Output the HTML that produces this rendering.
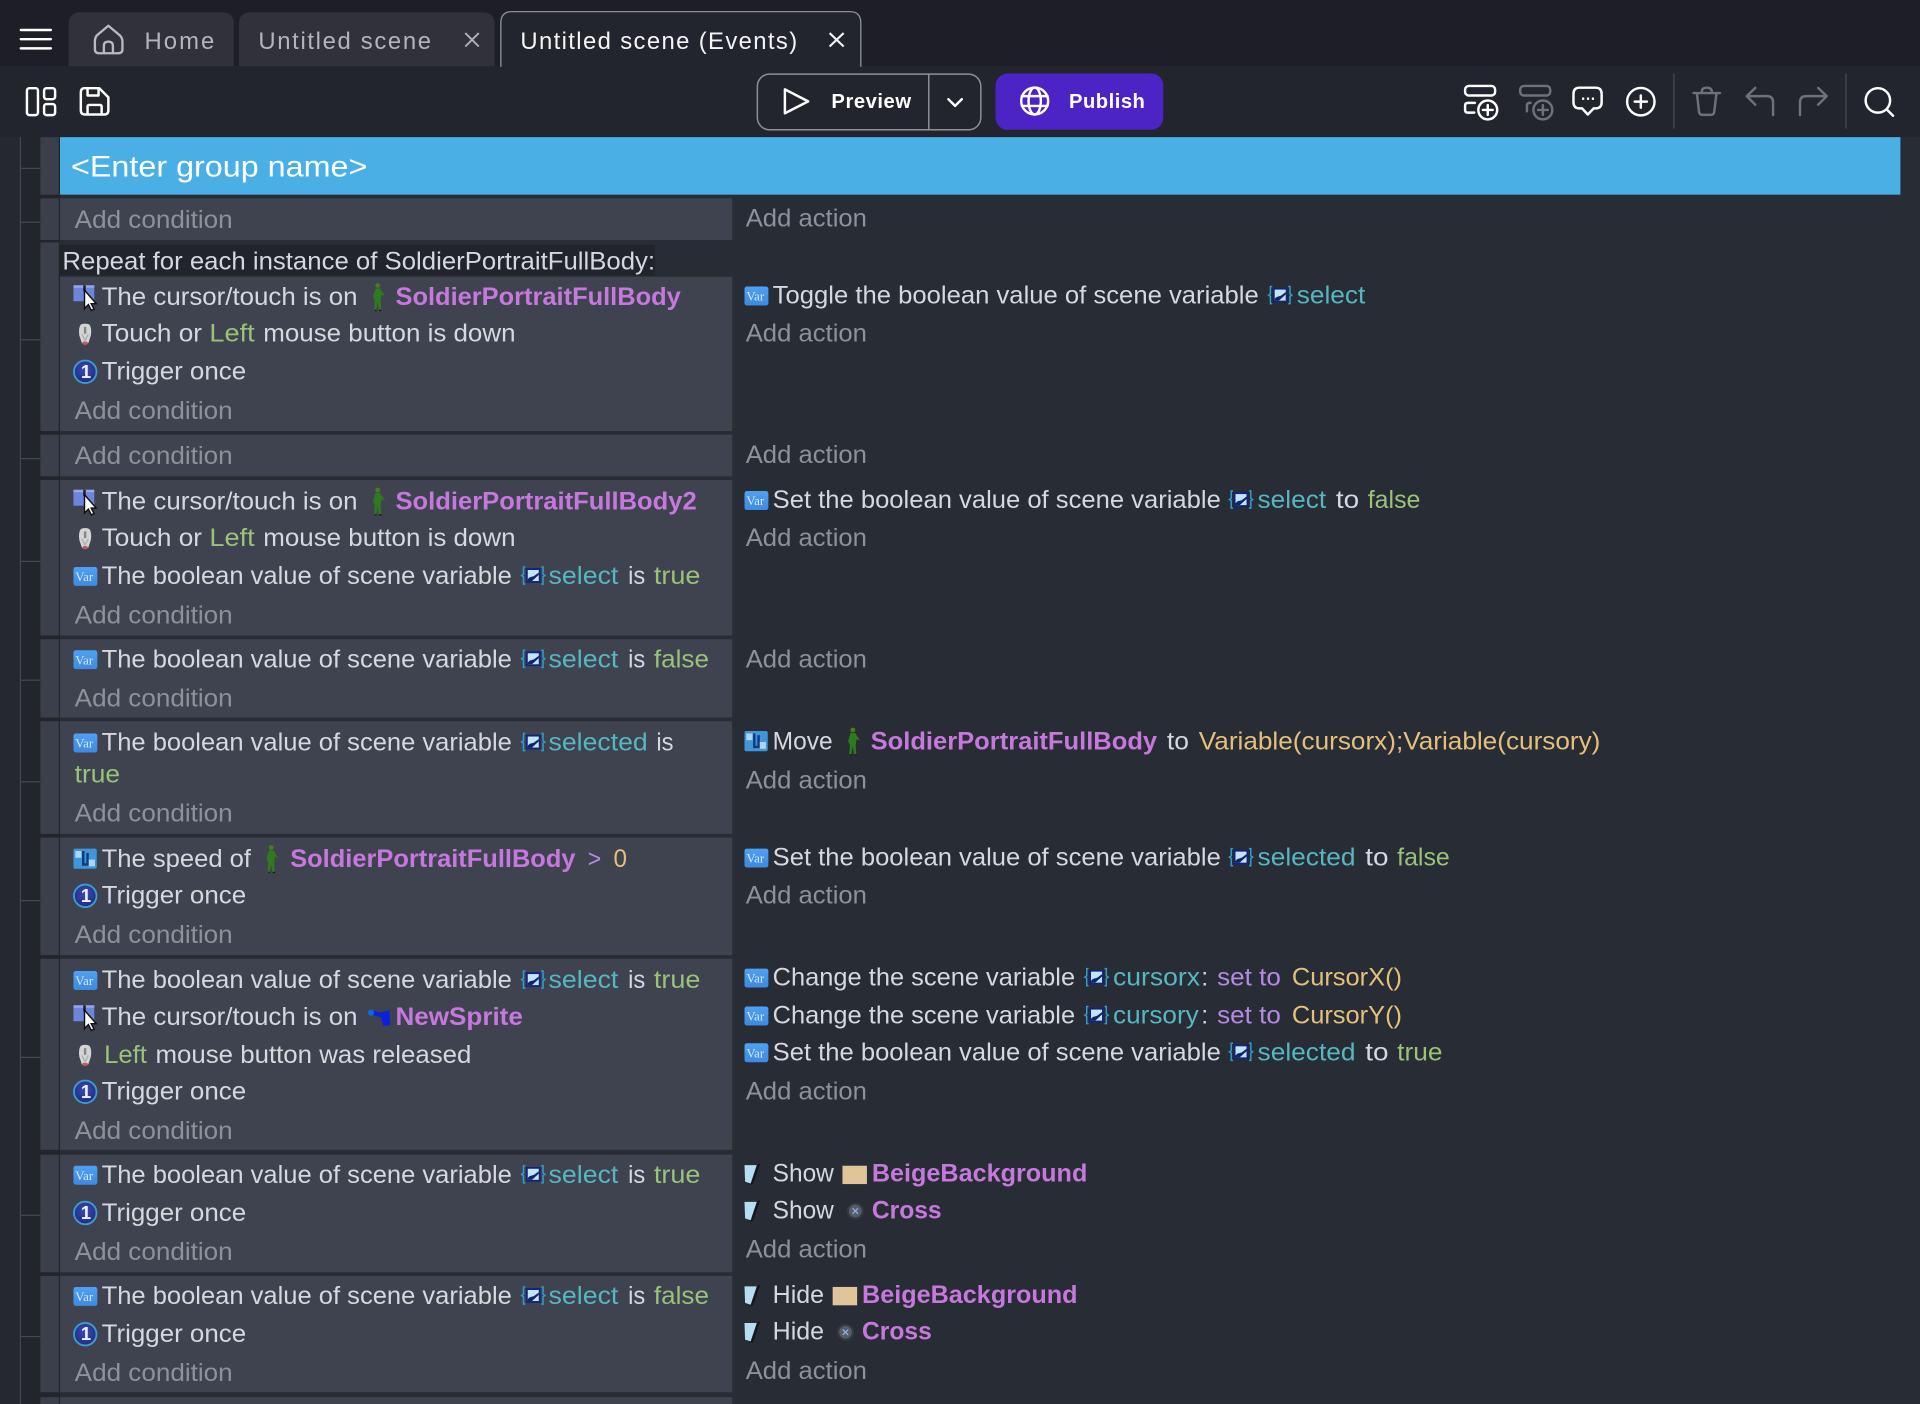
<!DOCTYPE html>
<html lang="en"><head><meta charset="utf-8"><title>Untitled scene (Events)</title>
<style>
html,body{margin:0;padding:0;background:#282c34;width:1920px;height:1404px;overflow:hidden}
svg{display:block;width:1920px;height:1404px}
text{font-family:"Liberation Sans",Arial,sans-serif;font-size:20.4px;fill:#d5d8de}
.a{fill:#8d919a}.p{fill:#c678dd;font-weight:700}.g{fill:#98c379}.c{fill:#56b6c2}.y{fill:#e5c07b}.m{fill:#b48ae6}
.tb{font-size:19.5px;fill:#b4b5ba}.tw{font-size:19.5px;fill:#f4f4f5}.bd{font-size:16.5px;font-weight:700;fill:#fff}
.v{font-family:"Liberation Serif",serif;font-size:10.5px;fill:#d5e8fb}.o{font-size:15px;font-weight:700;fill:#f0f3ff}
.s{fill:none;stroke:#fff;stroke-width:2;stroke-linecap:round;stroke-linejoin:round}
.d{fill:none;stroke:#6f7178;stroke-width:2;stroke-linecap:round;stroke-linejoin:round}
</style></head><body>
<svg xmlns="http://www.w3.org/2000/svg" viewBox="0 0 1568 1146.6" preserveAspectRatio="none">
<defs>
<linearGradient id="vg" x1="0" y1="0" x2="0" y2="1"><stop offset="0" stop-color="#4fa0f2"/><stop offset="1" stop-color="#3d8ae2"/></linearGradient>
<radialGradient id="og" cx=".5" cy=".4" r=".6"><stop offset="0" stop-color="#3c4cb4"/><stop offset="1" stop-color="#1f2c80"/></radialGradient>
<g id="var"><rect x="0" y="0" width="19.5" height="15.5" rx="2" fill="url(#vg)"/></g>
<g id="cur"><rect x="0" y="0" width="17" height="13" fill="#6d86dc"/><rect x="0" y="0" width="17" height="2" fill="#93a8ea"/><rect x="8" y="0" width="2" height="5" fill="#1a1c22"/><path d="M9 4V19L12.2 15.8 14.6 20.5 16.8 19.4 14.5 15H18.6Z" fill="#fff" stroke="#111" stroke-width="1.2"/></g>
<g id="mouse" transform="translate(2,1)"><path d="M2.5 1Q6-.5 9.5 1 11.7 4 10.7 10L8.7 16Q6 19 3.3 16L1.3 10Q.3 4 2.5 1Z" fill="#d4d5d3"/><path d="M6 3V8.5" stroke="#85878c" stroke-width="2" fill="none"/><path d="M3.4 9 6 14 8.6 9" stroke="#a9abaf" stroke-width="1" fill="none"/><path d="M3.6 16.2Q6 18.9 8.4 16.2L7.6 15H4.4Z" fill="#c8555a"/></g>
<g id="one"><circle cx="9.6" cy="9.6" r="9.2" fill="url(#og)" stroke="#3a9ed4" stroke-width="1.5"/></g>
<g id="sv"><path d="M3 1H1.5V7L0 8 1.5 9V15H3M16 1H17.5V7L19 8 17.5 9V15H16" fill="none" stroke="#2f9ed0" stroke-width="1.2"/><rect x="3.5" y="2" width="12" height="12" fill="#12247a"/><rect x="5" y="3.5" width="9" height="9" fill="#c2e4f6"/><path d="M5 12.5H8.5L14 7.5V5.5L10 8.5 6.5 9.5 5 11Z" fill="#0f2470"/></g>
<g id="sol"><circle cx="5.5" cy="2.2" r="2" fill="#4a7a1e"/><path d="M3.6 4.6H7.4L11.5 11 8.6 9.6 7.8 14.5 8.4 22.5H6.4L5.4 15.5 4.3 22.5H2.5L3.1 14.5 1.6 11.5Z" fill="#2f7a1c"/><path d="M3 22.5H4.6M6.6 22.5H8.6" stroke="#1a1f10" stroke-width="1.2"/></g>
<g id="eye"><path d="M3 1.5H13L8 16.5 3.5 15Z" fill="#b5def2"/><path d="M13.5 1 16 0 10 17 6 18 8.4 16.2Z" fill="#14161b"/></g>
<g id="x"><circle cx="7" cy="7" r="7" fill="#35383f"/><circle cx="7" cy="7" r="5.2" fill="#565c69"/><path d="M4.8 4.8 9.2 9.2M9.2 4.8 4.8 9.2" stroke="#8cb4e6" stroke-width="1"/></g>
<g id="mv"><rect x="0" y="0" width="19" height="16.5" rx="1.5" fill="#3f97da"/><path d="M8 2V13H11.5V3.5" fill="none" stroke="#123a7e" stroke-width="2"/><rect x="1.5" y="2" width="5" height="5.5" fill="#a9d8f5"/><rect x="12.5" y="9" width="5" height="5.5" fill="#a9d8f5"/></g>
</defs>

<!-- chrome -->
<rect width="1568" height="1147" fill="#282c34"/>
<rect width="1568" height="54" fill="#1d1e27"/>
<rect y="54" width="1568" height="58" fill="#23252e"/>
<path class="s" d="M17 24.5H41.5M17 32H41.5M17 39.5H41.5" stroke-width="2.5"/>
<path d="M56 54V20Q56 10 66 10H181Q191 10 191 20V54Z" fill="#30313b"/>
<path d="M195 54V20Q195 10 205 10H394Q404 10 404 20V54Z" fill="#30313b"/>
<path d="M409 54V19Q409 9.5 418 9.5H694Q703 9.5 703 19V54Z" fill="#23252e" stroke="#8e8f95" stroke-width="1.1"/>
<rect x="409.6" y="53" width="292.8" height="3" fill="#23252e"/>
<path d="M88.5 21 98 29Q100 31 100 34V40Q100 43.5 96.5 43.5H81Q77.5 43.5 77.5 40V34Q77.5 31 79 29ZM84.8 43.5V37.5Q84.8 34 88.5 34 92.2 34 92.2 37.5V43.5" fill="none" stroke="#b9babe" stroke-width="1.9" stroke-linejoin="round"/>
<text class="tb" x="118" y="40" textLength="57">Home</text>
<text class="tb" x="211" y="40" textLength="141">Untitled scene</text>
<path d="M380 27 391 38M391 27 380 38" stroke="#b4b5ba" stroke-width="1.5" fill="none"/>
<text class="tw" x="425" y="40" textLength="226">Untitled scene (Events)</text>
<path d="M677.5 27 689 38M689 27 677.5 38" stroke="#f4f4f5" stroke-width="1.7" fill="none"/>

<!-- toolbar left -->
<rect class="s" x="22" y="72" width="9" height="22" rx="2"/><rect class="s" x="36" y="72" width="9" height="9" rx="2"/><rect class="s" x="36" y="85" width="9" height="9" rx="2"/>
<path class="s" d="M69 72H81L88.5 79.5V90Q88.5 93.5 85 93.5H69.5Q66 93.5 66 90V75.5Q66 72 69 72ZM71.5 93.5V87Q71.5 85.7 73 85.7H81.5Q83 85.7 83 87V93.5M71.5 72V78H80.5V72"/>

<!-- preview / publish -->
<rect x="618.5" y="60.5" width="182.5" height="45.5" rx="10" fill="none" stroke="#8f9096" stroke-width="1.2"/>
<path d="M758.5 60.5V106" stroke="#8f9096" stroke-width="1.2"/>
<path class="s" d="M641 73 660 82.8 641 92.5Z"/>
<text class="bd" x="679" y="88" textLength="65">Preview</text>
<path class="s" d="M774.5 81 780 86.5 785.5 81"/>
<rect x="813" y="60" width="137" height="46" rx="10" fill="#4c24c6"/>
<circle class="s" cx="845" cy="82.5" r="11"/><ellipse class="s" cx="845" cy="82.5" rx="5" ry="11"/><path class="s" d="M834.5 78.5H855.5M834.5 86.5H855.5"/>
<text class="bd" x="873" y="88" textLength="62">Publish</text>

<!-- toolbar right -->
<rect class="s" x="1196.5" y="70.2" width="24.5" height="7.8" rx="3"/>
<path class="s" d="M1204.5 84H1199Q1196.5 84 1196.5 86V90Q1196.5 92 1199 92H1204"/>
<circle class="s" cx="1215" cy="89.8" r="7.7"/><path class="s" d="M1211 89.8H1219M1215 85.8V93.8"/>
<rect class="d" x="1241.5" y="70.2" width="24.5" height="7.8" rx="3"/>
<path class="d" d="M1250 84H1249Q1247 84 1247 86.5V91"/>
<circle class="d" cx="1260" cy="89.8" r="7.7"/><path class="d" d="M1256 89.8H1264M1260 85.8V93.8"/>
<path class="s" d="M1290 71.6H1303Q1308 71.6 1308 76.6V83.5Q1308 88.5 1303 88.5H1301.5L1296.7 93.5 1292 88.5H1290Q1285 88.5 1285 83.5V76.6Q1285 71.6 1290 71.6Z"/>
<path d="M1292 80.6H1293.8M1296 80.6H1297.8M1300 80.6H1301.8" stroke="#fff" stroke-width="2" fill="none"/>
<circle class="s" cx="1340" cy="83" r="11.2"/><path class="s" d="M1335 83H1345M1340 78V88"/>
<path d="M1367 60V105M1507.6 60V105" stroke="#42444d" stroke-width="1.2"/>
<path class="d" d="M1383 76H1404.7M1385.8 76 1387.5 91Q1387.8 93.8 1390.5 93.8H1397Q1399.8 93.8 1400 91L1401.8 76M1389.8 76V75Q1389.8 71.6 1393.8 71.6 1398 71.6 1398 75V76"/>
<path class="d" d="M1433.5 71.8 1426.5 78.5 1433.5 85.5M1426.5 78.5H1443Q1448 78.5 1448 83.5V94"/>
<path class="d" d="M1484.8 71.8 1491.8 78.5 1484.8 85.5M1491.8 78.5H1475Q1470 78.5 1470 83.5V94"/>
<circle class="s" cx="1533.6" cy="82" r="10"/><path class="s" d="M1541 89.5 1546 94.5"/>

<!-- tree gutter -->
<rect x="17" y="112" width="16" height="1035" fill="#22252c"/>
<rect x="0" y="112" width="17" height="1035" fill="#25282f"/>
<rect x="33" y="112" width="16" height="1035" fill="#22252c"/>
<rect x="16.2" y="112" width="1" height="1035" fill="#45484f"/>
<g fill="#45484f"><rect x="17" y="137" width="16" height="1"/><rect x="17" y="181" width="16" height="1"/><rect x="17" y="277" width="16" height="1"/><rect x="17" y="374" width="16" height="1"/><rect x="17" y="458" width="16" height="1"/><rect x="17" y="555" width="16" height="1"/><rect x="17" y="638" width="16" height="1"/><rect x="17" y="735" width="16" height="1"/><rect x="17" y="863" width="16" height="1"/><rect x="17" y="992" width="16" height="1"/><rect x="17" y="1091" width="16" height="1"/></g>

<!-- left strips -->
<g fill="#3b3f4b">
<rect x="33" y="112" width="15" height="47"/><rect x="33" y="162" width="15" height="34"/><rect x="33" y="198" width="15" height="154"/><rect x="33" y="355" width="15" height="34"/><rect x="33" y="392" width="15" height="127"/><rect x="33" y="522" width="15" height="64"/><rect x="33" y="589" width="15" height="92"/><rect x="33" y="684" width="15" height="96"/><rect x="33" y="783" width="15" height="156"/><rect x="33" y="943" width="15" height="96"/><rect x="33" y="1042" width="15" height="95"/><rect x="33" y="1141" width="15" height="6"/>
</g>

<!-- group -->
<rect x="49" y="112" width="1503" height="47" fill="#4aafe4"/>
<text x="58" y="144" style="font-size:24px;fill:#fff" textLength="242" lengthAdjust="spacingAndGlyphs">&lt;Enter group name&gt;</text>

<!-- condition backgrounds -->
<g fill="#3f4350">
<rect x="49" y="162" width="549" height="34"/><rect x="49" y="226" width="549" height="126"/><rect x="49" y="355" width="549" height="34"/><rect x="49" y="392" width="549" height="127"/><rect x="49" y="522" width="549" height="64"/><rect x="49" y="589" width="549" height="92"/><rect x="49" y="684" width="549" height="96"/><rect x="49" y="783" width="549" height="156"/><rect x="49" y="943" width="549" height="96"/><rect x="49" y="1042" width="549" height="95"/><rect x="49" y="1141" width="549" height="6"/>
</g>
<rect x="49" y="200" width="486" height="25" fill="#22242c"/>

<!-- R1 -->
<text class="a" x="61" y="186" textLength="129" lengthAdjust="spacingAndGlyphs">Add condition</text>
<text class="a" x="609" y="185" textLength="99" lengthAdjust="spacingAndGlyphs">Add action</text>
<text x="51" y="220" textLength="484" lengthAdjust="spacingAndGlyphs">Repeat for each instance of SoldierPortraitFullBody:</text>

<!-- R2 -->
<use href="#cur" x="60" y="233"/>
<text x="83" y="249" textLength="209" lengthAdjust="spacingAndGlyphs">The cursor/touch is on</text>
<use href="#sol" x="303" y="231"/>
<text class="p" x="323" y="249" textLength="233" lengthAdjust="spacingAndGlyphs">SoldierPortraitFullBody</text>
<use href="#mouse" x="61.5" y="263"/>
<text x="83" y="279" textLength="82" lengthAdjust="spacingAndGlyphs">Touch or</text>
<text class="g" x="171" y="279" textLength="37" lengthAdjust="spacingAndGlyphs">Left</text>
<text x="215" y="279" textLength="206" lengthAdjust="spacingAndGlyphs">mouse button is down</text>
<use href="#one" x="60" y="294"/><text class="o" x="66" y="308.5">1</text>
<text x="83" y="310" textLength="118" lengthAdjust="spacingAndGlyphs">Trigger once</text>
<text class="a" x="61" y="342" textLength="129" lengthAdjust="spacingAndGlyphs">Add condition</text>
<use href="#var" x="608" y="234"/><text class="v" x="609.5" y="245.5">Var</text>
<text x="631" y="248" textLength="397" lengthAdjust="spacingAndGlyphs">Toggle the boolean value of scene variable</text>
<use href="#sv" x="1036" y="233"/>
<text class="c" x="1059" y="248" textLength="56" lengthAdjust="spacingAndGlyphs">select</text>
<text class="a" x="609" y="279" textLength="99" lengthAdjust="spacingAndGlyphs">Add action</text>

<!-- R3 -->
<text class="a" x="61" y="379" textLength="129" lengthAdjust="spacingAndGlyphs">Add condition</text>
<text class="a" x="609" y="378" textLength="99" lengthAdjust="spacingAndGlyphs">Add action</text>

<!-- R4 -->
<use href="#cur" x="60" y="400"/>
<text x="83" y="416" textLength="209" lengthAdjust="spacingAndGlyphs">The cursor/touch is on</text>
<use href="#sol" x="303" y="398"/>
<text class="p" x="323" y="416" textLength="246" lengthAdjust="spacingAndGlyphs">SoldierPortraitFullBody2</text>
<use href="#mouse" x="61.5" y="430"/>
<text x="83" y="446" textLength="82" lengthAdjust="spacingAndGlyphs">Touch or</text>
<text class="g" x="171" y="446" textLength="37" lengthAdjust="spacingAndGlyphs">Left</text>
<text x="215" y="446" textLength="206" lengthAdjust="spacingAndGlyphs">mouse button is down</text>
<use href="#var" x="60" y="463"/><text class="v" x="61.5" y="474.5">Var</text>
<text x="83" y="477" textLength="335" lengthAdjust="spacingAndGlyphs">The boolean value of scene variable</text>
<use href="#sv" x="426" y="462"/>
<text class="c" x="448" y="477" textLength="57" lengthAdjust="spacingAndGlyphs">select</text>
<text x="513" y="477" textLength="14" lengthAdjust="spacingAndGlyphs">is</text>
<text class="g" x="534" y="477" textLength="38" lengthAdjust="spacingAndGlyphs">true</text>
<text class="a" x="61" y="509" textLength="129" lengthAdjust="spacingAndGlyphs">Add condition</text>
<use href="#var" x="608" y="401"/><text class="v" x="609.5" y="412.5">Var</text>
<text x="631" y="415" textLength="366" lengthAdjust="spacingAndGlyphs">Set the boolean value of scene variable</text>
<use href="#sv" x="1004" y="400"/>
<text class="c" x="1027" y="415" textLength="56" lengthAdjust="spacingAndGlyphs">select</text>
<text x="1091" y="415" textLength="19" lengthAdjust="spacingAndGlyphs">to</text>
<text class="g" x="1117" y="415" textLength="43" lengthAdjust="spacingAndGlyphs">false</text>
<text class="a" x="609" y="446" textLength="99" lengthAdjust="spacingAndGlyphs">Add action</text>

<!-- R5 -->
<use href="#var" x="60" y="531"/><text class="v" x="61.5" y="542.5">Var</text>
<text x="83" y="545" textLength="335" lengthAdjust="spacingAndGlyphs">The boolean value of scene variable</text>
<use href="#sv" x="426" y="530"/>
<text class="c" x="448" y="545" textLength="57" lengthAdjust="spacingAndGlyphs">select</text>
<text x="513" y="545" textLength="14" lengthAdjust="spacingAndGlyphs">is</text>
<text class="g" x="534" y="545" textLength="45" lengthAdjust="spacingAndGlyphs">false</text>
<text class="a" x="61" y="577" textLength="129" lengthAdjust="spacingAndGlyphs">Add condition</text>
<text class="a" x="609" y="545" textLength="99" lengthAdjust="spacingAndGlyphs">Add action</text>

<!-- R6 -->
<use href="#var" x="60" y="599"/><text class="v" x="61.5" y="610.5">Var</text>
<text x="83" y="613" textLength="335" lengthAdjust="spacingAndGlyphs">The boolean value of scene variable</text>
<use href="#sv" x="426" y="598"/>
<text class="c" x="448" y="613" textLength="81" lengthAdjust="spacingAndGlyphs">selected</text>
<text x="536" y="613" textLength="14" lengthAdjust="spacingAndGlyphs">is</text>
<text class="g" x="61" y="639" textLength="37" lengthAdjust="spacingAndGlyphs">true</text>
<text class="a" x="61" y="671" textLength="129" lengthAdjust="spacingAndGlyphs">Add condition</text>
<use href="#mv" x="608" y="597"/>
<text x="631" y="612" textLength="49" lengthAdjust="spacingAndGlyphs">Move</text>
<use href="#sol" x="691" y="594"/>
<text class="p" x="711" y="612" textLength="234" lengthAdjust="spacingAndGlyphs">SoldierPortraitFullBody</text>
<text x="953" y="612" textLength="18" lengthAdjust="spacingAndGlyphs">to</text>
<text class="y" x="979" y="612" textLength="328" lengthAdjust="spacingAndGlyphs">Variable(cursorx);Variable(cursory)</text>
<text class="a" x="609" y="644" textLength="99" lengthAdjust="spacingAndGlyphs">Add action</text>

<!-- R7 -->
<use href="#mv" x="60" y="693"/>
<text x="83" y="708" textLength="122" lengthAdjust="spacingAndGlyphs">The speed of</text>
<use href="#sol" x="216" y="690"/>
<text class="p" x="237" y="708" textLength="233" lengthAdjust="spacingAndGlyphs">SoldierPortraitFullBody</text>
<text class="m" x="480" y="708" textLength="11" lengthAdjust="spacingAndGlyphs">&gt;</text>
<text class="y" x="501" y="708" textLength="11" lengthAdjust="spacingAndGlyphs">0</text>
<use href="#one" x="60" y="722"/><text class="o" x="66" y="736.5">1</text>
<text x="83" y="738" textLength="118" lengthAdjust="spacingAndGlyphs">Trigger once</text>
<text class="a" x="61" y="770" textLength="129" lengthAdjust="spacingAndGlyphs">Add condition</text>
<use href="#var" x="608" y="693"/><text class="v" x="609.5" y="704.5">Var</text>
<text x="631" y="707" textLength="366" lengthAdjust="spacingAndGlyphs">Set the boolean value of scene variable</text>
<use href="#sv" x="1004" y="692"/>
<text class="c" x="1027" y="707" textLength="80" lengthAdjust="spacingAndGlyphs">selected</text>
<text x="1115" y="707" textLength="19" lengthAdjust="spacingAndGlyphs">to</text>
<text class="g" x="1141" y="707" textLength="43" lengthAdjust="spacingAndGlyphs">false</text>
<text class="a" x="609" y="738" textLength="99" lengthAdjust="spacingAndGlyphs">Add action</text>

<!-- R8 -->
<use href="#var" x="60" y="793"/><text class="v" x="61.5" y="804.5">Var</text>
<text x="83" y="807" textLength="335" lengthAdjust="spacingAndGlyphs">The boolean value of scene variable</text>
<use href="#sv" x="426" y="792"/>
<text class="c" x="448" y="807" textLength="57" lengthAdjust="spacingAndGlyphs">select</text>
<text x="513" y="807" textLength="14" lengthAdjust="spacingAndGlyphs">is</text>
<text class="g" x="534" y="807" textLength="38" lengthAdjust="spacingAndGlyphs">true</text>
<use href="#cur" x="60" y="821"/>
<text x="83" y="837" textLength="209" lengthAdjust="spacingAndGlyphs">The cursor/touch is on</text>
<path d="M304 826Q307 825 309 827L318 825 319 837 313 838 311 831 305 829Z" fill="#0c22d8"/><circle cx="303" cy="827" r="2.5" fill="#0a6be0"/>
<text class="p" x="323" y="837" textLength="104" lengthAdjust="spacingAndGlyphs">NewSprite</text>
<use href="#mouse" x="61.5" y="852"/>
<text class="g" x="85" y="868" textLength="35" lengthAdjust="spacingAndGlyphs">Left</text>
<text x="127" y="868" textLength="258" lengthAdjust="spacingAndGlyphs">mouse button was released</text>
<use href="#one" x="60" y="882"/><text class="o" x="66" y="896.5">1</text>
<text x="83" y="898" textLength="118" lengthAdjust="spacingAndGlyphs">Trigger once</text>
<text class="a" x="61" y="930" textLength="129" lengthAdjust="spacingAndGlyphs">Add condition</text>
<use href="#var" x="608" y="791"/><text class="v" x="609.5" y="802.5">Var</text>
<text x="631" y="805" textLength="247" lengthAdjust="spacingAndGlyphs">Change the scene variable</text>
<use href="#sv" x="886" y="790"/>
<text class="c" x="909" y="805" textLength="71" lengthAdjust="spacingAndGlyphs">cursorx</text>
<text x="981" y="805">:</text>
<text class="m" x="994" y="805" textLength="52" lengthAdjust="spacingAndGlyphs">set to</text>
<text class="y" x="1055" y="805" textLength="90" lengthAdjust="spacingAndGlyphs">CursorX()</text>
<use href="#var" x="608" y="822"/><text class="v" x="609.5" y="833.5">Var</text>
<text x="631" y="836" textLength="247" lengthAdjust="spacingAndGlyphs">Change the scene variable</text>
<use href="#sv" x="886" y="821"/>
<text class="c" x="909" y="836" textLength="70" lengthAdjust="spacingAndGlyphs">cursory</text>
<text x="981" y="836">:</text>
<text class="m" x="994" y="836" textLength="52" lengthAdjust="spacingAndGlyphs">set to</text>
<text class="y" x="1055" y="836" textLength="90" lengthAdjust="spacingAndGlyphs">CursorY()</text>
<use href="#var" x="608" y="852"/><text class="v" x="609.5" y="863.5">Var</text>
<text x="631" y="866" textLength="366" lengthAdjust="spacingAndGlyphs">Set the boolean value of scene variable</text>
<use href="#sv" x="1004" y="851"/>
<text class="c" x="1027" y="866" textLength="80" lengthAdjust="spacingAndGlyphs">selected</text>
<text x="1115" y="866" textLength="19" lengthAdjust="spacingAndGlyphs">to</text>
<text class="g" x="1141" y="866" textLength="37" lengthAdjust="spacingAndGlyphs">true</text>
<text class="a" x="609" y="898" textLength="99" lengthAdjust="spacingAndGlyphs">Add action</text>

<!-- R9 -->
<use href="#var" x="60" y="952"/><text class="v" x="61.5" y="963.5">Var</text>
<text x="83" y="966" textLength="335" lengthAdjust="spacingAndGlyphs">The boolean value of scene variable</text>
<use href="#sv" x="426" y="951"/>
<text class="c" x="448" y="966" textLength="57" lengthAdjust="spacingAndGlyphs">select</text>
<text x="513" y="966" textLength="14" lengthAdjust="spacingAndGlyphs">is</text>
<text class="g" x="534" y="966" textLength="38" lengthAdjust="spacingAndGlyphs">true</text>
<use href="#one" x="60" y="981"/><text class="o" x="66" y="995.5">1</text>
<text x="83" y="997" textLength="118" lengthAdjust="spacingAndGlyphs">Trigger once</text>
<text class="a" x="61" y="1029" textLength="129" lengthAdjust="spacingAndGlyphs">Add condition</text>
<use href="#eye" x="605" y="950"/>
<text x="631" y="965" textLength="50" lengthAdjust="spacingAndGlyphs">Show</text>
<rect x="688" y="952" width="20" height="15" fill="#e0c49a"/>
<text class="p" x="712" y="965" textLength="176" lengthAdjust="spacingAndGlyphs">BeigeBackground</text>
<use href="#eye" x="605" y="980"/>
<text x="631" y="995" textLength="50" lengthAdjust="spacingAndGlyphs">Show</text>
<use href="#x" x="691.5" y="982"/>
<text class="p" x="712" y="995" textLength="57" lengthAdjust="spacingAndGlyphs">Cross</text>
<text class="a" x="609" y="1027" textLength="99" lengthAdjust="spacingAndGlyphs">Add action</text>

<!-- R10 -->
<use href="#var" x="60" y="1051"/><text class="v" x="61.5" y="1062.5">Var</text>
<text x="83" y="1065" textLength="335" lengthAdjust="spacingAndGlyphs">The boolean value of scene variable</text>
<use href="#sv" x="426" y="1050"/>
<text class="c" x="448" y="1065" textLength="57" lengthAdjust="spacingAndGlyphs">select</text>
<text x="513" y="1065" textLength="14" lengthAdjust="spacingAndGlyphs">is</text>
<text class="g" x="534" y="1065" textLength="45" lengthAdjust="spacingAndGlyphs">false</text>
<use href="#one" x="60" y="1080"/><text class="o" x="66" y="1094.5">1</text>
<text x="83" y="1096" textLength="118" lengthAdjust="spacingAndGlyphs">Trigger once</text>
<text class="a" x="61" y="1128" textLength="129" lengthAdjust="spacingAndGlyphs">Add condition</text>
<use href="#eye" x="605" y="1049"/>
<text x="631" y="1064" textLength="42" lengthAdjust="spacingAndGlyphs">Hide</text>
<rect x="680" y="1051" width="20" height="15" fill="#e0c49a"/>
<text class="p" x="704" y="1064" textLength="176" lengthAdjust="spacingAndGlyphs">BeigeBackground</text>
<use href="#eye" x="605" y="1079"/>
<text x="631" y="1094" textLength="42" lengthAdjust="spacingAndGlyphs">Hide</text>
<use href="#x" x="683.5" y="1081"/>
<text class="p" x="704" y="1094" textLength="57" lengthAdjust="spacingAndGlyphs">Cross</text>
<text class="a" x="609" y="1126" textLength="99" lengthAdjust="spacingAndGlyphs">Add action</text>
</svg>
</body></html>
